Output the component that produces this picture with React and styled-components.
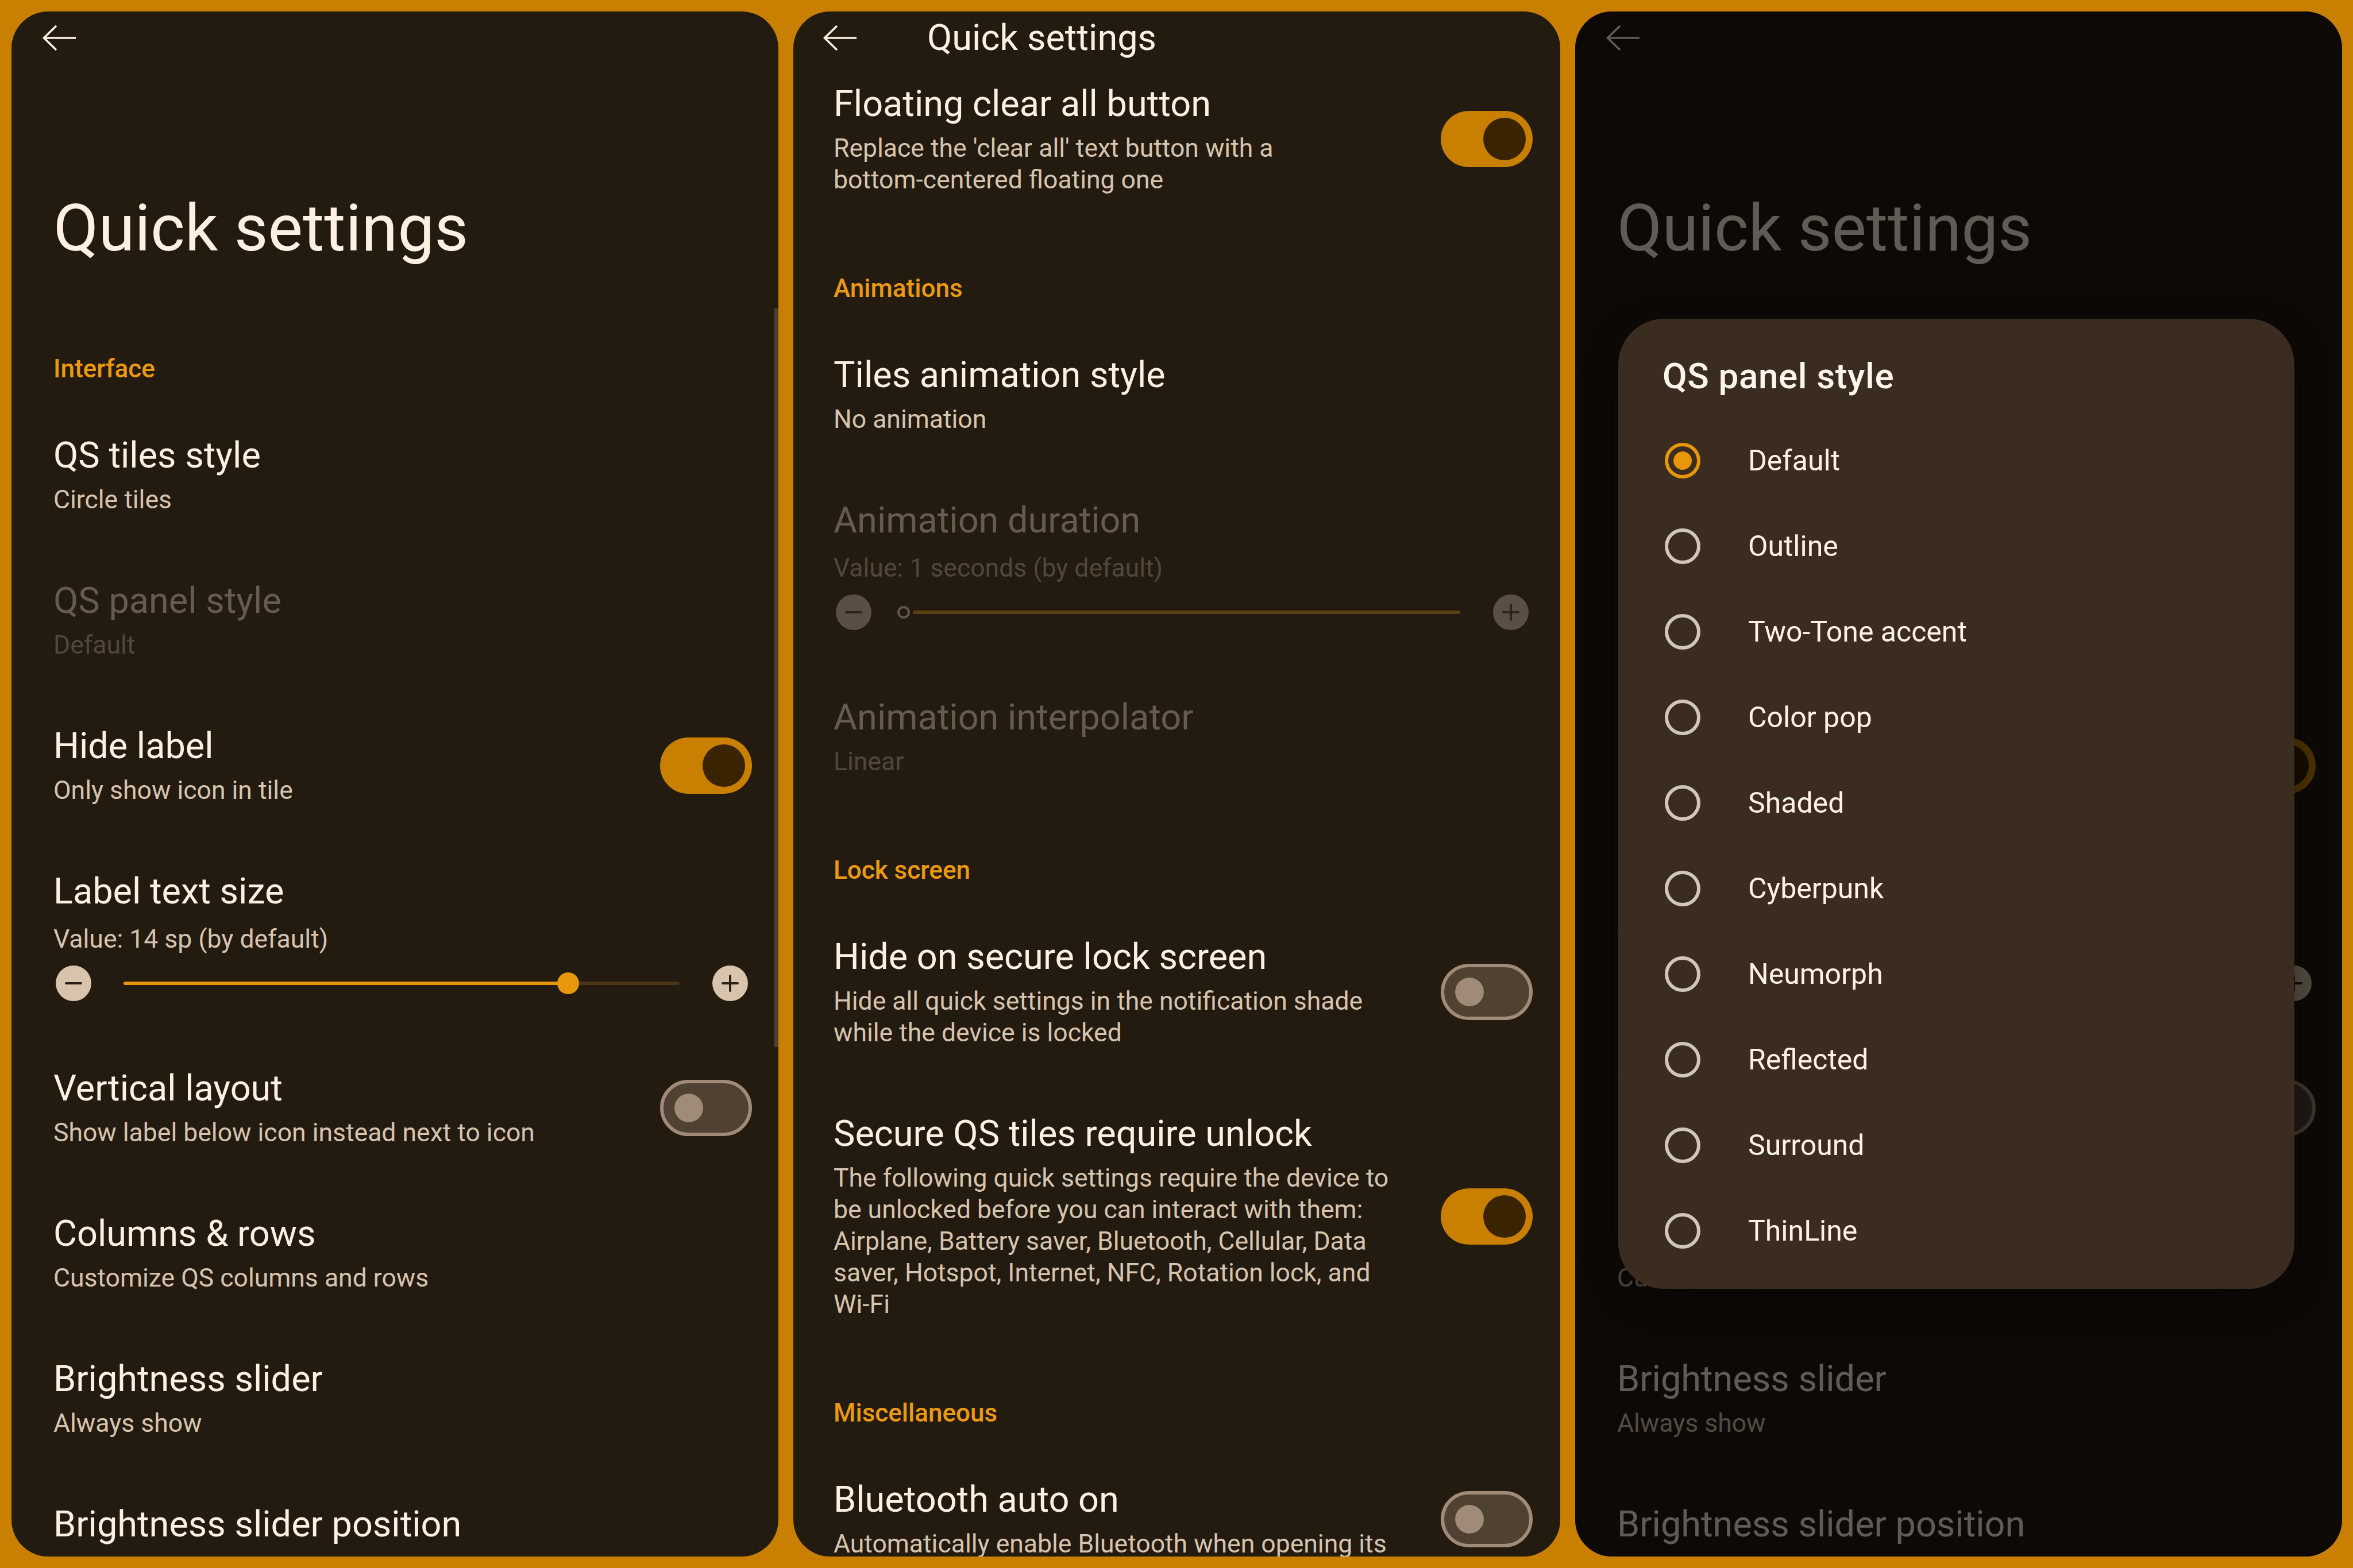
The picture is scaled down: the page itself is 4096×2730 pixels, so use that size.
import React from "react";
import styled, { createGlobalStyle, css } from "styled-components";

const C = {
  frame: "#C98000",
  panel: "#231A10",
  text: "#FFF0E2",
  sub: "#D7C4AE",
  accent: "#EB9A10",
  dimTitle: "#675B50",
  dimSub: "#52473D",
  dialog: "#3A2D20",
};

const GlobalStyle = createGlobalStyle`
  html, body {
    margin: 0;
    padding: 0;
    background: ${C.frame};
  }
  body {
    font-family: Roboto, "Noto Sans", "Liberation Sans", sans-serif;
    -webkit-font-smoothing: antialiased;
  }
  * {
    box-sizing: border-box;
  }
`;

const Page = styled.div`
  width: 4096px;
  height: 2730px;
  padding: 20px 19px 20px 20px;
  display: grid;
  grid-template-columns: repeat(3, 1fr);
  gap: 26px;
  background: ${C.frame};
`;

const Screen = styled.div`
  position: relative;
  overflow: hidden;
  background: ${C.panel};
  border-radius: 64px;
  display: flex;
  flex-direction: column;
`;

const TopBar = styled.div`
  flex: none;
  height: 92px;
  display: flex;
  align-items: center;
  gap: 121px;
  padding-left: ${(p) => p.$pl}px;
`;

const BarTitle = styled.div`
  font-size: 63px;
  line-height: 76px;
  color: ${C.text};
`;

const BigTitle = styled.h1`
  margin: 218px 0 72px;
  padding-left: 73px;
  font-size: 114px;
  line-height: 134px;
  font-weight: 400;
  color: ${C.text};
`;

const List = styled.div`
  display: flex;
  flex-direction: column;
  padding: 0 ${(p) => p.$pr}px 0 ${(p) => p.$pl}px;
  margin-top: ${(p) => p.$shift || 0}px;
`;

const Section = styled.div`
  padding: 80px 0 32px;
  font-size: 44px;
  line-height: 52px;
  font-weight: 500;
  color: ${C.accent};
`;

const Item = styled.div`
  display: flex;
  align-items: center;
  gap: 40px;
  padding: 55px 0;
  ${(p) =>
    p.$col &&
    css`
      flex-direction: column;
      align-items: stretch;
      gap: 0;
    `}
`;

const ItemText = styled.div`
  flex: 1;
  min-width: 0;
`;

const ItemTitle = styled.div`
  font-size: 63px;
  line-height: 76px;
  color: ${(p) => (p.$dim ? C.dimTitle : C.text)};
  white-space: nowrap;
`;

const ItemSub = styled.div`
  margin-top: ${(p) => (p.$slider ? 18 : 12)}px;
  font-size: 44.5px;
  line-height: 55px;
  color: ${(p) => (p.$dim ? C.dimSub : C.sub)};
`;

const Toggle = styled.div`
  flex: none;
  width: 160px;
  height: 98px;
  border-radius: 49px;
  display: flex;
  align-items: center;
  ${(p) =>
    p.$on
      ? css`
          background: ${C.frame};
          justify-content: flex-end;
          padding-right: 12px;
        `
      : css`
          background: #4f4232;
          border: 6px solid #9f8b77;
          padding-left: 19px;
        `}
`;

const Knob = styled.span`
  display: block;
  border-radius: 50%;
  ${(p) =>
    p.$on
      ? css`
          width: 74px;
          height: 74px;
          background: #3a2300;
        `
      : css`
          width: 50px;
          height: 50px;
          background: #9f8b77;
        `}
`;

const SliderRow = styled.div`
  margin-top: 14px;
  height: 70px;
  display: flex;
  align-items: center;
  padding: 0 7px 0 4px;
`;

const StepButton = styled.span`
  flex: none;
  position: relative;
  width: 62px;
  height: 62px;
  border-radius: 50%;
  background: ${(p) => (p.$dim ? "#5B4F45" : "#D8C4AC")};

  &::before,
  &::after {
    content: "";
    position: absolute;
    left: 50%;
    top: 50%;
    background: ${(p) => (p.$dim ? "#2C231A" : "#2A2015")};
    border-radius: 2px;
    transform: translate(-50%, -50%);
  }
  &::before {
    width: 30px;
    height: 4px;
  }
  &::after {
    width: 4px;
    height: 30px;
    display: ${(p) => (p.$plus ? "block" : "none")};
  }
`;

const Track = styled.div`
  flex: 1;
  position: relative;
  height: 6px;
  margin: 0 57px 0 56px;
  border-radius: 3px;
  background: ${(p) => (p.$dim ? "#5C4116" : "#4A3517")};
`;

const Fill = styled.div`
  position: absolute;
  left: 0;
  top: 0;
  bottom: 0;
  border-radius: 3px;
  background: #e8960a;
`;

const Thumb = styled.span`
  position: absolute;
  top: 50%;
  border-radius: 50%;
  transform: translate(-50%, -50%);
  ${(p) =>
    p.$dim
      ? css`
          width: 22px;
          height: 22px;
          background: ${C.panel};
          border: 4px solid #62564b;
          box-shadow: 0 0 0 6px ${C.panel};
        `
      : css`
          width: 38px;
          height: 38px;
          background: #e8960a;
        `}
`;

const ScrollBar = styled.div`
  position: absolute;
  right: 0;
  top: 517px;
  width: 7px;
  height: 1286px;
  background: #4b3f33;
`;

const Scrim = styled.div`
  position: absolute;
  inset: 0;
  background: rgba(0, 0, 0, 0.62);
`;

const Dialog = styled.div`
  position: absolute;
  left: 75px;
  top: 535px;
  width: 1177px;
  padding: 64px 77px 27px;
  border-radius: 80px;
  background: ${C.dialog};
  box-shadow: 0 20px 60px rgba(0, 0, 0, 0.35);
`;

const DialogTitle = styled.div`
  font-size: 62px;
  line-height: 72px;
  font-weight: 500;
  letter-spacing: 0.6px;
  color: #fff5ec;
  margin-bottom: 36px;
`;

const RadioRow = styled.div`
  height: 149px;
  display: flex;
  align-items: center;
  gap: 83px;
  padding-left: 4px;
  font-size: 50px;
  color: #fff3e8;
`;

const Radio = styled.span`
  flex: none;
  width: 62px;
  height: 62px;
  border-radius: 50%;
  border: 6px solid ${(p) => (p.$checked ? "#E8960A" : "#CFC6BC")};
  display: flex;
  align-items: center;
  justify-content: center;

  &::after {
    content: "";
    width: 32px;
    height: 32px;
    border-radius: 50%;
    background: #e8960a;
    display: ${(p) => (p.$checked ? "block" : "none")};
  }
`;

const BackArrow = () => (
  <svg width="62" height="46" viewBox="0 0 62 46" fill="none">
    <path
      d="M60 23H5M26 2L4.5 23L26 44"
      stroke={C.text}
      strokeWidth="3.6"
    />
  </svg>
);

const Setting = ({ title, sub, dim, toggle }) => (
  <Item>
    <ItemText>
      <ItemTitle $dim={dim}>{title}</ItemTitle>
      {sub && <ItemSub $dim={dim}>{sub}</ItemSub>}
    </ItemText>
    {toggle && (
      <Toggle $on={toggle === "on"}>
        <Knob $on={toggle === "on"} />
      </Toggle>
    )}
  </Item>
);

const SliderSetting = ({ title, sub, value, dim }) => (
  <Item $col>
    <ItemTitle $dim={dim}>{title}</ItemTitle>
    <ItemSub $dim={dim} $slider>
      {sub}
    </ItemSub>
    <SliderRow>
      <StepButton $dim={dim} />
      <Track $dim={dim}>
        {!dim && <Fill style={{ width: `${value * 100}%` }} />}
        <Thumb $dim={dim} style={{ left: `${value * 100}%` }} />
      </Track>
      <StepButton $dim={dim} $plus />
    </SliderRow>
  </Item>
);

const MainSettings = () => (
  <>
    <TopBar $pl={52}>
      <BackArrow />
    </TopBar>
    <BigTitle>Quick settings</BigTitle>
    <List $pl={73} $pr={46}>
      <Section>Interface</Section>
      <Setting title="QS tiles style" sub="Circle tiles" />
      <Setting title="QS panel style" sub="Default" dim />
      <Setting title="Hide label" sub="Only show icon in tile" toggle="on" />
      <SliderSetting title="Label text size" sub="Value: 14 sp (by default)" value={0.8} />
      <Setting
        title="Vertical layout"
        sub="Show label below icon instead next to icon"
        toggle="off"
      />
      <Setting title="Columns & rows" sub="Customize QS columns and rows" />
      <Setting title="Brightness slider" sub="Always show" />
      <Setting title="Brightness slider position" />
    </List>
  </>
);

const panelStyles = [
  "Default",
  "Outline",
  "Two-Tone accent",
  "Color pop",
  "Shaded",
  "Cyberpunk",
  "Neumorph",
  "Reflected",
  "Surround",
  "ThinLine",
];

export default function App() {
  return (
    <>
      <GlobalStyle />
      <Page>
        <Screen>
          <MainSettings />
          <ScrollBar />
        </Screen>

        <Screen>
          <TopBar $pl={50}>
            <BackArrow />
            <BarTitle>Quick settings</BarTitle>
          </TopBar>
          <List $pl={70} $pr={48} $shift={-24}>
            <Setting
              title="Floating clear all button"
              sub={
                <>
                  Replace the 'clear all' text button with a
                  <br />
                  bottom-centered floating one
                </>
              }
              toggle="on"
            />
            <Section>Animations</Section>
            <Setting title="Tiles animation style" sub="No animation" />
            <SliderSetting
              title="Animation duration"
              sub="Value: 1 seconds (by default)"
              value={0}
              dim
            />
            <Setting title="Animation interpolator" sub="Linear" dim />
            <Section>Lock screen</Section>
            <Setting
              title="Hide on secure lock screen"
              sub={
                <>
                  Hide all quick settings in the notification shade
                  <br />
                  while the device is locked
                </>
              }
              toggle="off"
            />
            <Setting
              title="Secure QS tiles require unlock"
              sub={
                <>
                  The following quick settings require the device to
                  <br />
                  be unlocked before you can interact with them:
                  <br />
                  Airplane, Battery saver, Bluetooth, Cellular, Data
                  <br />
                  saver, Hotspot, Internet, NFC, Rotation lock, and
                  <br />
                  Wi-Fi
                </>
              }
              toggle="on"
            />
            <Section>Miscellaneous</Section>
            <Setting
              title="Bluetooth auto on"
              sub="Automatically enable Bluetooth when opening its"
              toggle="off"
            />
          </List>
        </Screen>

        <Screen>
          <MainSettings />
          <Scrim />
          <Dialog>
            <DialogTitle>QS panel style</DialogTitle>
            {panelStyles.map((name, i) => (
              <RadioRow key={name}>
                <Radio $checked={i === 0} />
                {name}
              </RadioRow>
            ))}
          </Dialog>
        </Screen>
      </Page>
    </>
  );
}
